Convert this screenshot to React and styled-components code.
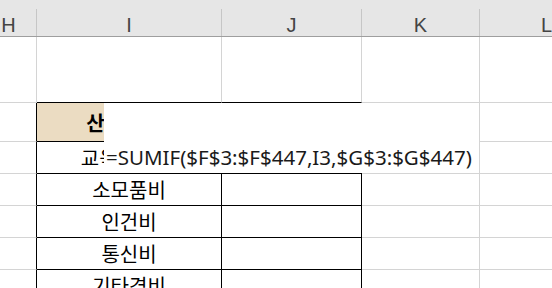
import React from 'react'
import styled, { createGlobalStyle } from 'styled-components'

const GlobalStyle = createGlobalStyle`
body{
margin:0;
background:#fff;
overflow:hidden;
}
`

const GRID = '#d4d4d4'
const INK = '#000'
const COLS = '56px 185px 140px 118px 134px'

const Sheet = styled.div`
position:relative;
margin-left:-19px;
width:633px;
font-family:"Noto Sans CJK KR","Noto Sans",sans-serif;
`
const HeadRow = styled.div`
display:grid;
grid-template-columns:${COLS};
align-items:end;
height:37px;
box-sizing:border-box;
background:#e6e6e6;
border-bottom:1px solid #9e9e9e;
`
const HeadCell = styled.div`
height:27px;
box-sizing:border-box;
padding-top:6px;
border-right:1px solid #c6c6c6;
text-align:center;
font-family:"Liberation Sans",Arial,sans-serif;
font-size:20px;
line-height:1;
color:#444;
`
const Row = styled.div`
display:grid;
grid-template-columns:${COLS};
height:${p => p.h}px;
`
const Cell = styled.div`
display:flex;
align-items:center;
justify-content:center;
box-sizing:border-box;
border-right:1px solid ${p => p.r || GRID};
border-bottom:1px solid ${p => p.b || GRID};
background:${p => p.bg || '#fff'};
font-size:20px;
color:${INK};
white-space:nowrap;
overflow:hidden;
`
const TitleCell = styled(Cell)`
font-weight:700;
letter-spacing:3px;
`
const Editor = styled.div`
position:absolute;
left:123px;
top:103px;
width:375px;
height:70px;
background:#fff;
display:flex;
align-items:flex-end;
z-index:2;
`
const Formula = styled.span`
line-height:32px;
padding-left:2px;
font-family:"Noto Sans","Noto Sans CJK KR",sans-serif;
font-size:20.5px;
color:#1a1a1a;
white-space:nowrap;
`

const TAN = '#ebdcc2'
const items = ['교육 훈련비', '소모품비', '인건비', '통신비', '기타경비']

export default function App() {
  return (
    <>
      <GlobalStyle />
      <Sheet>
        <HeadRow>
          <HeadCell>H</HeadCell>
          <HeadCell>I</HeadCell>
          <HeadCell>J</HeadCell>
          <HeadCell>K</HeadCell>
          <HeadCell>L</HeadCell>
        </HeadRow>
        <Row h={66}>
          <Cell />
          <Cell b={INK} />
          <Cell b={INK} />
          <Cell />
          <Cell />
        </Row>
        <Row h={39}>
          <Cell r={INK} />
          <TitleCell b={INK} bg={TAN}>산출내역</TitleCell>
          <Cell r={INK} b={INK} bg={TAN} />
          <Cell />
          <Cell />
        </Row>
        {items.map(name => (
          <Row h={32} key={name}>
            <Cell r={INK} />
            <Cell r={INK} b={INK}>{name}</Cell>
            <Cell r={INK} b={INK} />
            <Cell />
            <Cell />
          </Row>
        ))}
        <Editor>
          <Formula>=SUMIF($F$3:$F$447,I3,$G$3:$G$447)</Formula>
        </Editor>
      </Sheet>
    </>
  )
}
